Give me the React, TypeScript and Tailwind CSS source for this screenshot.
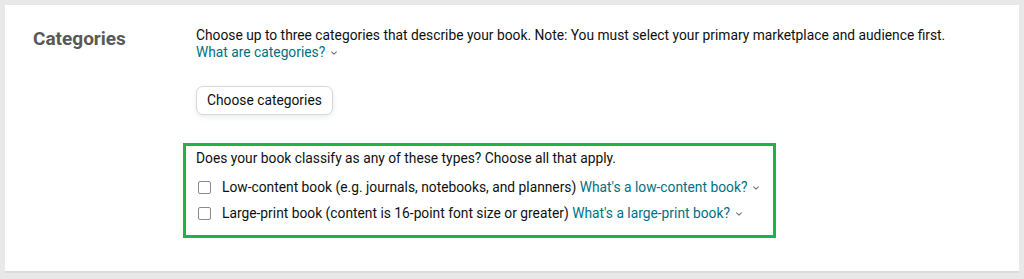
import React from 'react';

const Chevron = () => (
  <svg width="8" height="8" viewBox="0 0 10 10" fill="none" stroke="#6f7373" strokeWidth="1.3" strokeLinecap="round" strokeLinejoin="round" className="inline-block ml-[5px] mb-[1px]">
    <polyline points="2 3.5 5 6.5 8 3.5" />
  </svg>
);

export default function App() {
  return (
    <div className="w-[1024px] h-[279px] bg-[#e8e8e8] pt-[5px] pl-[5px] pr-[5px]" style={{ fontFamily: 'Roboto, "Noto Sans", sans-serif' }}>
      <div className="w-[1014px] h-[268px] bg-white border-b-2 border-[#dcdcdc] flex">
        {/* Label column */}
        <div className="w-[191px] pl-[28px] pt-[22px]">
          <h2 className="text-[19px] font-bold text-[#565959] leading-[24px]">Categories</h2>
        </div>

        {/* Content column */}
        <div className="flex-1 pt-[21px] text-[13.8px] text-[#0f1111]">
          <p className="leading-[18px]">
            Choose up to three categories that describe your book. Note: You must select your primary marketplace and audience first.
          </p>
          <a className="text-[#007185] leading-[16px] block">
            What are categories?<Chevron />
          </a>

          <button className="mt-[26px] h-[29px] px-[10px] rounded-[7px] border border-[#d5d9d9] bg-white shadow-[0_2px_5px_rgba(213,217,217,0.5)] text-[#0f1111] text-[13.8px]">
            Choose categories
          </button>

          <div className="mt-[28px] -ml-[13px] w-[593px] h-[95px] border-[3px] border-[#1fb14a] pl-[10px] pt-[2px]">
            <p className="leading-[20px]">Does your book classify as any of these types? Choose all that apply.</p>
            <div className="flex flex-col gap-[6px] mt-[9px]">
              <label className="flex items-center leading-[20px]">
                <span className="w-[13px] h-[13px] border border-[#888c8c] rounded-[2px] ml-[2px] mr-[11px] bg-white" />
                Low-content book (e.g. journals, notebooks, and planners)&nbsp;
                <span className="text-[#007185]">What's a low-content book?<Chevron /></span>
              </label>
              <label className="flex items-center leading-[20px]">
                <span className="w-[13px] h-[13px] border border-[#888c8c] rounded-[2px] ml-[2px] mr-[11px] bg-white" />
                Large-print book (content is 16-point font size or greater)&nbsp;
                <span className="text-[#007185]">What's a large-print book?<Chevron /></span>
              </label>
            </div>
          </div>
        </div>
      </div>
    </div>
  );
}
